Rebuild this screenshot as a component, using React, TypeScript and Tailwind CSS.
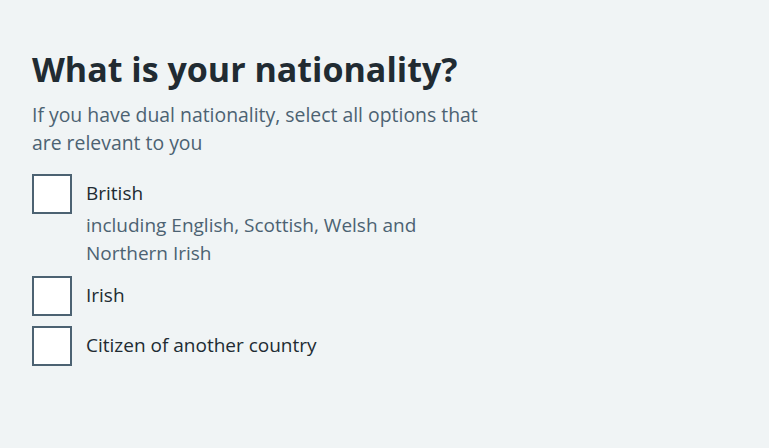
import * as React from "react";

const options = [
  {
    id: "british",
    label: "British",
    hint: "including English, Scottish, Welsh and Northern Irish",
  },
  { id: "irish", label: "Irish" },
  { id: "other", label: "Citizen of another country" },
];

export default function App() {
  return (
    <div
      className="min-h-[448px] w-full bg-[#f0f4f5] px-8 pt-[48px] text-[#212b32]"
      style={{ fontFamily: '"Open Sans", Arial, sans-serif' }}
    >
      <fieldset>
        <legend className="mb-[11px] text-[34px] font-bold leading-[42px]">
          What is your nationality?
        </legend>
        <div className="mb-[17px] max-w-[470px] text-[19.4px] leading-[28px] text-[#4c6272]">
          If you have dual nationality, select all options that are relevant to you
        </div>
        <div className="flex flex-col gap-[10px]">
          {options.map((o) => (
            <div key={o.id} className="flex items-start">
              <span className="h-10 w-10 shrink-0 border-2 border-[#4c6272] bg-white" />
              <div className="pl-[14px]">
                <label className="block pt-[5px] text-[19px] leading-[28px]">{o.label}</label>
                {o.hint && (
                  <div className="mt-[4px] mb-[-1px] max-w-[360px] text-[19px] leading-[28px] text-[#4c6272]">
                    {o.hint}
                  </div>
                )}
              </div>
            </div>
          ))}
        </div>
      </fieldset>
    </div>
  );
}
